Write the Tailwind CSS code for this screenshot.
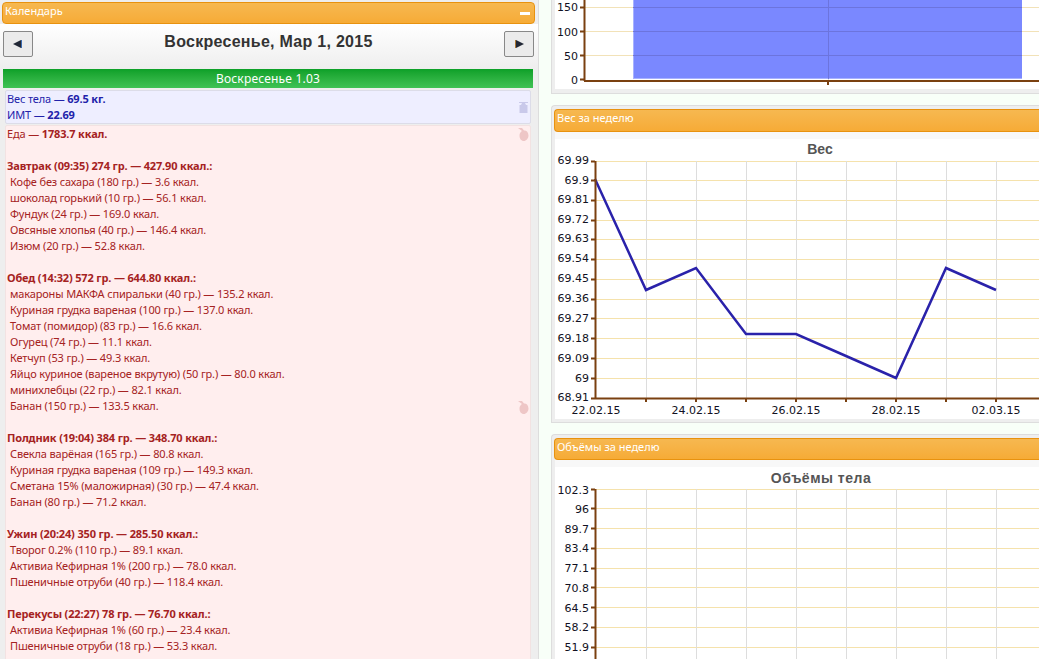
<!DOCTYPE html>
<html lang="ru">
<head>
    <meta charset="UTF-8">
    <title>Календарь</title>
    <script src="https://cdn.jsdelivr.net/npm/@tailwindcss/browser@4"></script>
</head>
<body class="bg-[#f8fff8] font-['Noto_Sans',sans-serif] text-[11px] overflow-hidden">
<div class="flex h-[659px] w-[1039px] overflow-hidden">

    <!-- левая колонка: календарь -->
    <div class="w-[539px] h-[659px] shrink-0 bg-[#eeeeee] border-r border-[#dddddd] overflow-hidden">
        <div class="mt-[2px] ml-[2px] w-[533px] h-[22px] flex items-center justify-between pl-[2px] pr-[3px] pb-[3px] rounded-[4px] border border-[#e8920f] bg-gradient-to-b from-[#f6b850] to-[#f6ab36] text-white">
            <span>Календарь</span>
            <span class="block w-[10px] h-[3px] bg-white mr-[1px] mt-[3px]"></span>
        </div>
        <div class="h-[45px] flex items-center justify-between pl-[3px] pr-[4px] pb-[5px] w-[538px] bg-gradient-to-b from-white to-[#eeeeee]">
            <button class="w-[30px] h-[26px] flex items-center justify-center border border-[#888888] rounded-[2px] bg-[#ebebeb]">
                <svg width="10" height="10" viewBox="0 0 10 10"><path d="M0 5 L8 1 V9 Z" fill="#222836"/><rect x="8" y="1" width="1" height="8" fill="#3a6ab0"/></svg>
            </button>
            <h1 class="font-['Liberation_Sans',sans-serif] font-bold text-[16px] tracking-[0.28px] text-[#333333] pb-[5px]">Воскресенье, Мар 1, 2015</h1>
            <button class="w-[30px] h-[26px] flex items-center justify-center border border-[#888888] rounded-[2px] bg-[#ebebeb]">
                <svg width="10" height="10" viewBox="0 0 10 10"><path d="M10 5 L2 1 V9 Z" fill="#222836"/><rect x="1" y="1" width="1" height="8" fill="#b07830"/></svg>
            </button>
        </div>
        <div class="ml-[3px] w-[530px] h-[19px] flex items-center justify-center bg-gradient-to-b from-[#0ba028] to-[#3fc254] text-white text-[12px] tracking-[0.2px]">Воскресенье 1.03</div>

        <div class="ml-[5px] w-[526px] mt-[2px] h-[34px] relative bg-[#eeeeff] border border-[#dcdce8] rounded-[2px] text-[#2222aa] leading-[16px] tracking-[-0.15px]">
            <p class="pl-[1px]">Вес тела — <b>69.5 кг.</b></p>
            <p class="pl-[1px]">ИМТ — <b>22.69</b></p>
            <svg class="absolute right-[2px] top-[11px]" width="9" height="11" viewBox="0 0 9 11"><path d="M0 0 H9 V1 H6 L7 3 H8.500 V11 H0.500 V3 H2 L3 1 H0 Z" fill="#c9c9ea"/></svg>
        </div>

        <div class="ml-[5px] w-[526px] mt-[1px] h-[560px] relative bg-[#ffeeee] border border-[#f2e2e2] rounded-[2px] text-[#a52222] leading-[16px] pl-[1px] tracking-[-0.15px]">
            <svg class="absolute right-[1px] top-[2px]" width="11" height="13" viewBox="0 0 11 13"><path d="M0 0 H4 L6 2.500 C8 2 10.500 4 10.500 7.500 C10.500 10.500 8 13 6 13 C3 13 1.500 10.500 1.500 7.500 C1.500 5.500 2.500 4 4 3 Z" fill="#eec6c6"/></svg>
            <svg class="absolute right-[1px] top-[275px]" width="11" height="13" viewBox="0 0 11 13"><path d="M0 0 H4 L6 2.500 C8 2 10.500 4 10.500 7.500 C10.500 10.500 8 13 6 13 C3 13 1.500 10.500 1.500 7.500 C1.500 5.500 2.500 4 4 3 Z" fill="#eec6c6"/></svg>
            <p>Еда — <b>1783.7 ккал.</b></p>
            <p class="h-[16px]"></p>
            <p><b>Завтрак (09:35) 274 гр. — 427.90 ккал.:</b></p>
            <ul class="pl-[3px]">
                <li>Кофе без сахара (180 гр.) — 3.6 ккал.</li>
                <li>шоколад горький (10 гр.) — 56.1 ккал.</li>
                <li>Фундук (24 гр.) — 169.0 ккал.</li>
                <li>Овсяные хлопья (40 гр.) — 146.4 ккал.</li>
                <li>Изюм (20 гр.) — 52.8 ккал.</li>
            </ul>
            <p class="h-[16px]"></p>
            <p><b>Обед (14:32) 572 гр. — 644.80 ккал.:</b></p>
            <ul class="pl-[3px]">
                <li>макароны МАКФА спиральки (40 гр.) — 135.2 ккал.</li>
                <li>Куриная грудка вареная (100 гр.) — 137.0 ккал.</li>
                <li>Томат (помидор) (83 гр.) — 16.6 ккал.</li>
                <li>Огурец (74 гр.) — 11.1 ккал.</li>
                <li>Кетчуп (53 гр.) — 49.3 ккал.</li>
                <li>Яйцо куриное (вареное вкрутую) (50 гр.) — 80.0 ккал.</li>
                <li>минихлебцы (22 гр.) — 82.1 ккал.</li>
                <li>Банан (150 гр.) — 133.5 ккал.</li>
            </ul>
            <p class="h-[16px]"></p>
            <p><b>Полдник (19:04) 384 гр. — 348.70 ккал.:</b></p>
            <ul class="pl-[3px]">
                <li>Свекла варёная (165 гр.) — 80.8 ккал.</li>
                <li>Куриная грудка вареная (109 гр.) — 149.3 ккал.</li>
                <li>Сметана 15% (маложирная) (30 гр.) — 47.4 ккал.</li>
                <li>Банан (80 гр.) — 71.2 ккал.</li>
            </ul>
            <p class="h-[16px]"></p>
            <p><b>Ужин (20:24) 350 гр. — 285.50 ккал.:</b></p>
            <ul class="pl-[3px]">
                <li>Творог 0.2% (110 гр.) — 89.1 ккал.</li>
                <li>Активиа Кефирная 1% (200 гр.) — 78.0 ккал.</li>
                <li>Пшеничные отруби (40 гр.) — 118.4 ккал.</li>
            </ul>
            <p class="h-[16px]"></p>
            <p><b>Перекусы (22:27) 78 гр. — 76.70 ккал.:</b></p>
            <ul class="pl-[3px]">
                <li>Активиа Кефирная 1% (60 гр.) — 23.4 ккал.</li>
                <li>Пшеничные отруби (18 гр.) — 53.3 ккал.</li>
            </ul>
        </div>
    </div>

    <!-- правая колонка: графики -->
    <div class="ml-[12px] w-[600px] shrink-0">
        <!-- вес за месяц, виден только низ -->
        <div class="h-[94px] bg-[#eeeeee] border-l border-b border-[#dddddd] pl-[3px] pb-[4px]">
            <div class="h-[89px] bg-white">
                <svg class="block" width="596" height="89" viewBox="555 0 596 89" font-family="DejaVu Sans, sans-serif" font-size="11" fill="#111122">
                    <path d="M585 7.500H1150M585 31.500H1150M585 55.500H1150" stroke="#f2e2b8"/>
                    <path d="M828.500 0V80" stroke="#ddd"/>
                    <rect x="633" y="0" width="389" height="79" fill="#7a88ff"/>
                    <path d="M633.500 0V79M633 78.500H1022" stroke="#a8b2ff"/>
                    <path d="M633 7.500H1022M633 31.500H1022M633 55.500H1022M828.500 0V79" stroke="#6c74dd"/>
                    <path d="M584.500 0V81M584 81H1150" stroke="#7a4010" stroke-width="2" fill="none"/>
                    <path d="M580 7.500H584M580 31.500H584M580 55.500H584M580 79.500H584M828 81V85" stroke="#7a4010" stroke-width="2"/>
                    <text x="578" y="11" text-anchor="end">150</text>
                    <text x="578" y="36" text-anchor="end">100</text>
                    <text x="578" y="60" text-anchor="end">50</text>
                    <text x="578" y="84" text-anchor="end">0</text>
                </svg>
            </div>
        </div>

        <!-- вес за неделю -->
        <div class="mt-[11px] h-[318px] bg-[#eeeeee] border border-r-0 border-[#dddddd] rounded-tl-[4px] pl-[2px] pt-[3px]">
            <div class="h-[23px] flex items-center pl-[2px] pb-[4px] rounded-l-[4px] border border-r-0 border-[#e8920f] bg-gradient-to-b from-[#f6b850] to-[#f6ab36] text-white">Вес за неделю</div>
            <div class="ml-[1px] h-[287px] bg-white">
                <svg class="block" width="596" height="287" viewBox="555 131 596 287" font-family="DejaVu Sans, sans-serif" font-size="11" fill="#111122">
                    <rect x="555" y="131" width="596" height="7" fill="#f8f8f8"/>
                    <text x="820" y="153" text-anchor="middle" font-family="Liberation Sans, sans-serif" font-size="14" font-weight="bold" fill="#555555">Вес</text>
                    <path d="M595 160.500H1150M595 179.500H1150M595 199.500H1150M595 219.500H1150M595 238.500H1150M595 258.500H1150M595 278.500H1150M595 298.500H1150M595 317.500H1150M595 337.500H1150M595 357.500H1150M595 377.500H1150" stroke="#f5e2ac"/>
                    <path d="M646.500 160V397M696.500 160V397M746.500 160V397M796.500 160V397M846.500 160V397M896.500 160V397M946.500 160V397M996.500 160V397" stroke="#dddddd"/>
                    <path d="M595 178L646 289L696 267L746 333L796 333L846 355L896 377L946 267L996 289" stroke="#2a22aa" stroke-width="2.500" fill="none"/>
                    <path d="M595.500 160V398M595 397.500H1150" stroke="#7a4010" stroke-width="2" fill="none"/>
                    <path d="M591 160.500H595M591 179.500H595M591 199.500H595M591 219.500H595M591 238.500H595M591 258.500H595M591 278.500H595M591 298.500H595M591 317.500H595M591 337.500H595M591 357.500H595M591 377.500H595M591 397.500H595M646 397V401M696 397V401M746 397V401M796 397V401M846 397V401M896 397V401M946 397V401M996 397V401" stroke="#7a4010" stroke-width="2"/>
                    <g text-anchor="end">
                        <text x="589" y="163">69.99</text>
                        <text x="589" y="183">69.9</text>
                        <text x="589" y="202">69.81</text>
                        <text x="589" y="222">69.72</text>
                        <text x="589" y="241">69.63</text>
                        <text x="589" y="261">69.54</text>
                        <text x="589" y="281">69.45</text>
                        <text x="589" y="301">69.36</text>
                        <text x="589" y="321">69.27</text>
                        <text x="589" y="341">69.18</text>
                        <text x="589" y="361">69.09</text>
                        <text x="589" y="381">69</text>
                        <text x="589" y="400">68.91</text>
                    </g>
                    <g text-anchor="middle">
                        <text x="596" y="413">22.02.15</text>
                        <text x="696" y="413">24.02.15</text>
                        <text x="796" y="413">26.02.15</text>
                        <text x="896" y="413">28.02.15</text>
                        <text x="996" y="413">02.03.15</text>
                    </g>
                </svg>
            </div>
        </div>

        <!-- объёмы за неделю -->
        <div class="mt-[11px] h-[240px] bg-[#eeeeee] border border-r-0 border-b-0 border-[#dddddd] rounded-tl-[4px] pl-[2px] pt-[3px]">
            <div class="h-[22px] flex items-center pl-[2px] pb-[4px] rounded-l-[4px] border border-r-0 border-[#e8920f] bg-gradient-to-b from-[#f6b850] to-[#f6ab36] text-white">Объёмы за неделю</div>
            <div class="ml-[1px] h-[210px] bg-white">
                <svg class="block" width="596" height="210" viewBox="555 460 596 210" font-family="DejaVu Sans, sans-serif" font-size="11" fill="#111122">
                    <rect x="555" y="460" width="596" height="7" fill="#f8f8f8"/>
                    <text x="821" y="483" text-anchor="middle" font-family="Liberation Sans, sans-serif" font-size="14" font-weight="bold" letter-spacing="0.5" fill="#555555">Объёмы тела</text>
                    <path d="M595 489.500H1150M595 508.500H1150M595 528.500H1150M595 548.500H1150M595 568.500H1150M595 587.500H1150M595 607.500H1150M595 627.500H1150M595 647.500H1150" stroke="#f5e2ac"/>
                    <path d="M646.500 489V670M696.500 489V670M746.500 489V670M796.500 489V670M846.500 489V670M896.500 489V670M946.500 489V670M996.500 489V670" stroke="#dddddd"/>
                    <path d="M595.500 489V670" stroke="#7a4010" stroke-width="2"/>
                    <path d="M591 489.500H595M591 508.500H595M591 528.500H595M591 548.500H595M591 568.500H595M591 587.500H595M591 607.500H595M591 627.500H595M591 647.500H595" stroke="#7a4010" stroke-width="2"/>
                    <g text-anchor="end">
                        <text x="589" y="494">102.3</text>
                        <text x="589" y="513">96</text>
                        <text x="589" y="533">89.7</text>
                        <text x="589" y="552">83.4</text>
                        <text x="589" y="572">77.1</text>
                        <text x="589" y="592">70.8</text>
                        <text x="589" y="612">64.5</text>
                        <text x="589" y="631">58.2</text>
                        <text x="589" y="651">51.9</text>
                    </g>
                </svg>
            </div>
        </div>
    </div>
</div>
</body>
</html>
